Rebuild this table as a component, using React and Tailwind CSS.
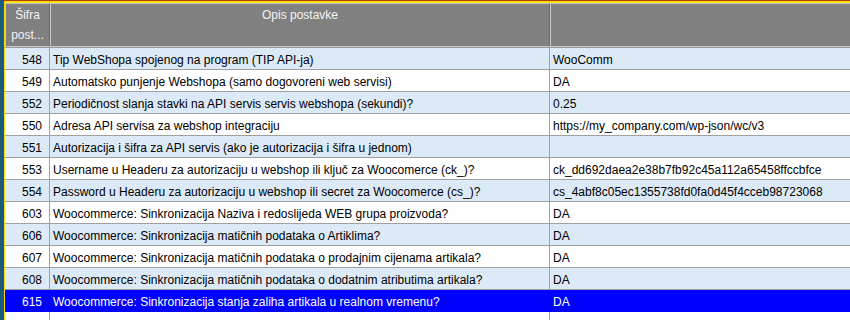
import React from "react";

const rows = [
  ["548", "Tip WebShopa spojenog na program (TIP API-ja)", "WooComm"],
  ["549", "Automatsko punjenje Webshopa (samo dogovoreni web servisi)", "DA"],
  ["552", "Periodičnost slanja stavki na API servis servis webshopa (sekundi)?", "0.25"],
  ["550", "Adresa API servisa za webshop integraciju", "https://my_company.com/wp-json/wc/v3"],
  ["551", "Autorizacija i šifra za API servis (ako je autorizacija i šifra u jednom)", ""],
  ["553", "Username u Headeru za autorizaciju u webshop ili ključ za Woocomerce (ck_)?", "ck_dd692daea2e38b7fb92c45a112a65458ffccbfce"],
  ["554", "Password u Headeru za autorizaciju u webshop ili secret za Woocomerce (cs_)?", "cs_4abf8c05ec1355738fd0fa0d45f4cceb98723068"],
  ["603", "Woocommerce: Sinkronizacija Naziva i redoslijeda WEB grupa proizvoda?", "DA"],
  ["606", "Woocommerce: Sinkronizacija matičnih podataka o Artiklima?", "DA"],
  ["607", "Woocommerce: Sinkronizacija matičnih podataka o prodajnim cijenama artikala?", "DA"],
  ["608", "Woocommerce: Sinkronizacija matičnih podataka o dodatnim atributima artikala?", "DA"],
  ["615", "Woocommerce: Sinkronizacija stanja zaliha artikala u realnom vremenu?", "DA"],
];

export default function App() {
  return (
    <div
      className="w-[850px] h-[320px] flex bg-white overflow-hidden"
      style={{ fontFamily: '"Liberation Sans", Arial, sans-serif' }}
    >
      <div className="w-[4px] bg-[#1d5a80] shrink-0" />
      <div className="flex-1 flex flex-col min-w-0">
        <div className="h-[1px] bg-[#b83a0c] shrink-0" />
        <div className="flex-1 flex flex-col border-l border-t-2 border-[#f6de10] min-h-0">
          {/* header */}
          <div className="flex h-[45px] bg-[#808080] text-[#f4f4f4] text-[12px] leading-[20px] shrink-0 border-b border-[#9c9c9c]">
            <div className="w-[45px] shrink-0 border border-[#c8c8c8] border-r-[#6c6c6c] flex flex-col items-center pt-[1px]">
              <div>Šifra</div>
              <div>post...</div>
            </div>
            <div className="w-[500px] shrink-0 border border-[#c8c8c8] border-r-[#6c6c6c] flex justify-center pt-[1px]">
              <div>Opis postavke</div>
            </div>
            <div className="flex-1 border border-[#c8c8c8] border-r-0" />
          </div>
          {/* rows */}
          {rows.map((r, i) => {
            const sel = i === rows.length - 1;
            const bg = sel ? "bg-[#0000ff] text-white" : i % 2 === 0 ? "bg-[#dce9f7] text-black" : "bg-white text-black";
            const line = sel ? "border-[#0000ff]" : "border-[#a0a0a0]";
            return (
              <div key={r[0]} className={`flex h-[22px] shrink-0 text-[12px] leading-[17px] border-b ${line} ${bg}`}>
                <div className={`w-[45px] shrink-0 border-r ${line} text-right pr-[7px] pt-[4px]`}>{r[0]}</div>
                <div className={`w-[500px] shrink-0 border-r ${line} pl-[3px] pt-[4px] whitespace-nowrap overflow-hidden`}>{r[1]}</div>
                <div className="flex-1 pl-[3px] pt-[4px] whitespace-nowrap overflow-hidden">{r[2]}</div>
              </div>
            );
          })}
          <div className="flex flex-1">
            <div className="w-[45px] shrink-0 border-r border-[#a0a0a0]" />
            <div className="w-[500px] shrink-0 border-r border-[#a0a0a0]" />
            <div className="flex-1" />
          </div>
        </div>
      </div>
    </div>
  );
}
